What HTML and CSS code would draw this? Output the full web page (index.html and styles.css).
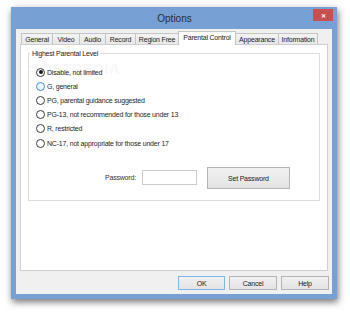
FILE: index.html
```html
<!DOCTYPE html>
<html>
<head>
<meta charset="utf-8">
<link rel="stylesheet" href="styles.css">
</head>
<body>
<div class="window">
  <div class="titlebar">
    <span class="title">Options</span>
    <span class="close">&#x2715;</span>
  </div>
  <div class="client">
    <div class="tabs">
      <div class="tab">General</div>
      <div class="tab">Video</div>
      <div class="tab">Audio</div>
      <div class="tab">Record</div>
      <div class="tab">Region Free</div>
      <div class="tab active">Parental Control</div>
      <div class="tab">Appearance</div>
      <div class="tab">Information</div>
    </div>
    <div class="panel">
      <fieldset class="group">
        <legend class="group-label">Highest Parental Level</legend>
        <div class="radios">
          <label class="radio"><span class="dot checked"></span>Disable, not limited</label>
          <label class="radio"><span class="dot hover"></span>G, general</label>
          <label class="radio"><span class="dot"></span>PG, parental guidance suggested</label>
          <label class="radio"><span class="dot"></span>PG-13, not recommended for those under 13</label>
          <label class="radio"><span class="dot"></span>R, restricted</label>
          <label class="radio"><span class="dot"></span>NC-17, not appropriate for those under 17</label>
        </div>
        <div class="pw-row">
          <span class="pw-label">Password:</span>
          <span class="pw-input"></span>
          <span class="btn set-btn">Set Password</span>
        </div>
      </fieldset>
    </div>
    <div class="actions">
      <span class="btn action default">OK</span>
      <span class="btn action">Cancel</span>
      <span class="btn action">Help</span>
    </div>
  </div>
</div>
<div class="watermark">SOFTPEDIA<span class="wm-url">www.softpedia.com</span></div>
</body>
</html>
```

FILE: styles.css
```css
html, body {
  margin: 0;
  padding: 0;
  background: #ffffff;
}
body {
  width: 350px;
  height: 312px;
  overflow: hidden;
  font-family: "Liberation Sans", Arial, sans-serif;
  font-size: 7px;
  letter-spacing: -0.2px;
  color: #1e1e1e;
  position: relative;
}
.window {
  margin: 7px 0 0 11px;
  width: 326px;
  height: 292px;
  box-sizing: border-box;
  background: #77a1d4;
  padding: 0 5px 5px 5px;
  display: flex;
  flex-direction: column;
  box-shadow: 1px 3px 7px rgba(0, 0, 0, 0.55);
}
.titlebar {
  height: 22px;
  display: grid;
  grid-template-columns: 1fr auto 1fr;
  align-items: center;
  margin-right: -1px;
}
.title {
  grid-column: 2;
  font-size: 10px;
  letter-spacing: 0;
  color: #2a2a2a;
  padding-top: 1px;
}
.close {
  grid-column: 3;
  justify-self: end;
  align-self: start;
  margin-top: 2px;
  width: 20px;
  height: 12px;
  background: #c75050;
  color: #ffffff;
  font-size: 6px;
  font-weight: bold;
  letter-spacing: 0;
  display: flex;
  align-items: center;
  justify-content: center;
}
.client {
  flex: 1;
  background: #f0f0f0;
  padding: 2px 4px 4px 4px;
  display: flex;
  flex-direction: column;
}
.tabs {
  height: 13px;
  display: flex;
  align-items: flex-end;
  padding-left: 1px;
  position: relative;
  z-index: 1;
}
.tab {
  box-sizing: border-box;
  height: 11px;
  margin-left: -1px;
  border: 1px solid #c4c4c4;
  border-bottom: none;
  background: linear-gradient(#f3f3f3, #e8e8e8);
  display: flex;
  align-items: center;
  justify-content: center;
  white-space: nowrap;
  color: #222;
}
.tab:first-child { margin-left: 0; width: 32px; }
.tab:nth-child(2) { width: 28px; }
.tab:nth-child(3) { width: 27px; }
.tab:nth-child(4) { width: 31px; }
.tab:nth-child(5) { width: 44px; }
.tab:nth-child(6) { width: 58px; }
.tab:nth-child(7) { width: 44px; }
.tab:nth-child(8) { width: 40px; }
.tab.active {
  height: 14px;
  margin-bottom: -1px;
  background: #ffffff;
  border-color: #c4c4c4;
  padding-bottom: 2px;
  position: relative;
  z-index: 2;
}
.panel {
  height: 227px;
  box-sizing: border-box;
  background: #ffffff;
  border: 1px solid #cfcfcf;
  padding: 4px 7px 0 7px;
}
.group {
  margin: 0;
  padding: 0 0 11px 7px;
  border: 1px solid #dcdcdc;
  min-width: 0;
}
.group-label {
  padding: 0 2px;
  margin-left: -6px;
  line-height: 9px;
  color: #222;
}
.radios {
  margin-top: 7px;
  display: flex;
  flex-direction: column;
}
.radio {
  height: 14.2px;
  display: flex;
  align-items: center;
  gap: 2px;
  white-space: nowrap;
}
.dot {
  width: 9px;
  height: 9px;
  box-sizing: border-box;
  border: 1px solid #3a3a3a;
  border-radius: 50%;
  background: #ffffff;
  display: flex;
  align-items: center;
  justify-content: center;
  flex: none;
}
.dot.checked::after {
  content: "";
  width: 4px;
  height: 4px;
  border-radius: 50%;
  background: #1a1a1a;
}
.dot.hover {
  border-color: #3c8be0;
  background: #eef6fd;
}
.pw-row {
  margin-top: 16px;
  padding-left: 69px;
  display: flex;
  align-items: center;
}
.pw-label {
  color: #333;
  margin-right: 6px;
}
.pw-input {
  width: 55px;
  height: 15px;
  box-sizing: border-box;
  border: 1px solid #c9cbd0;
  background: #ffffff;
  margin-right: 10px;
}
.btn {
  box-sizing: border-box;
  border: 1px solid #b4b4b4;
  background: linear-gradient(#f1f1f1, #e3e3e3);
  display: flex;
  align-items: center;
  justify-content: center;
  color: #222;
}
.set-btn {
  width: 83px;
  height: 22px;
  margin-top: 1px;
}
.actions {
  margin-top: 5px;
  margin-right: -1px;
  display: flex;
  justify-content: flex-end;
  gap: 4px;
}
.action {
  width: 48px;
  height: 14px;
}
.action.default {
  width: 47px;
  border-color: #7db7ec;
}
.watermark {
  position: absolute;
  left: 30px;
  top: 61px;
  font-size: 15px;
  font-weight: bold;
  letter-spacing: 0.5px;
  color: rgba(0, 0, 0, 0.05);
  line-height: 15px;
}
.wm-url {
  display: block;
  font-size: 5px;
  font-weight: normal;
  letter-spacing: 0;
  margin-left: 14px;
  margin-top: 7px;
}
```
